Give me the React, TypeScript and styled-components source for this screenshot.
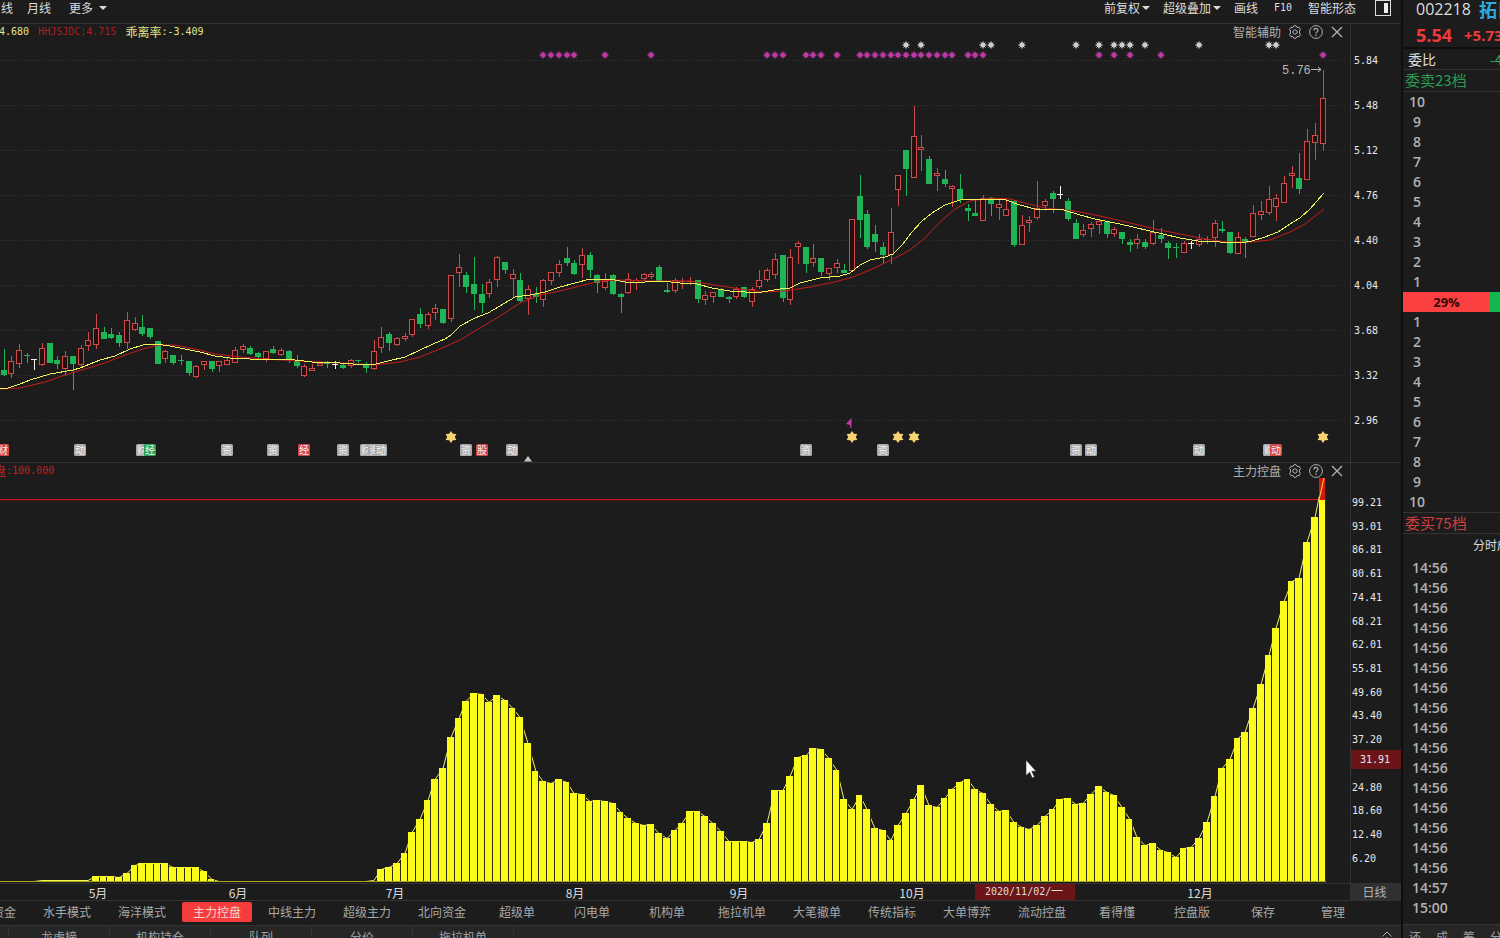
import React from "react";
import styled, { createGlobalStyle } from "styled-components";

const cjk = `"Noto Sans CJK SC", sans-serif`;
const mono = `"DejaVu Sans Mono", "Noto Sans CJK SC", monospace`;

const GlobalStyle = createGlobalStyle`
  * { box-sizing: border-box; }
  body {
    margin: 0;
    background: #1c1c1c;
    color: #dcdcdc;
    font: 12px/16px ${cjk};
    overflow: hidden;
  }
  button {
    margin: 0;
    padding: 0;
    border: 0;
    background: none;
    color: inherit;
    font: inherit;
    cursor: pointer;
    white-space: nowrap;
  }
`;

/* ---------- data ---------- */

// Horizontal position of the n-th trading session.
const sessionX = (n: number) => Math.round(3.5 + n * 7.714);

// Each session: colour, high, body top, body bottom, low.
// Levels count in thirds of a pixel below the block's origin.
const blocks: { origin: number; rows: string }[] = [
  {
    origin: 290,
    rows: `G178,240,255,258 R198,213,250,265 R163,181,218,235 G190,196,198,220 W208,208,208,240
    R160,175,223,228 G160,160,218,220 G198,210,223,238 R183,199,235,258 G199,199,222,300
    R165,175,223,233 R127,150,166,182 R72,115,163,178 G112,126,146,148 G115,132,143,146
    G127,136,158,172 R67,91,157,178 R82,99,116,122 G75,112,131,137 G115,115,142,147
    G152,153,221,222 R180,184,203,218 G195,196,218,226 G195,210,211,226 G213,214,248,258
    R225,229,257,263 R213,213,223,240 G213,214,238,246 R213,214,226,246 R205,211,223,226
    R172,181,217,218 R162,167,176,190 G168,174,193,196 G185,189,201,208 R183,184,203,217
    G168,178,190,192 R175,181,193,198 G181,183,208,220 G195,212,228,234 R223,229,254,262
    R222,235,241,243 R215,218,226,228 G213,220,221,235 W213,221,221,238 G220,225,233,236
    R208,209,226,234 G210,211,211,220 G215,226,235,250`,
  },
  {
    origin: 230,
    rows: `R330,364,415,420 R290,322,352,368 G305,312,338,362 R322,325,341,347 R308,317,325,332
    R267,268,313,320 G235,252,281,293 R246,253,284,296 R223,235,247,270 G237,238,278,282
    R135,136,265,275 R72,112,127,172 G127,135,171,188 G82,162,191,240 G163,193,218,250
    R148,157,190,205 R78,82,146,172 G95,96,119,132 R118,133,145,203 G128,150,214,216
    R165,178,205,255 G172,192,202,218 R147,151,208,230 R126,127,149,165 R90,103,125,140
    G51,84,98,108 G90,99,131,134 R55,76,103,145 G66,75,119,145 G133,134,160,188
    R130,153,170,180 G133,134,191,194 G190,193,200,248 R130,147,187,193 R145,149,155,180
    R128,133,143,152 R127,133,139,147 G105,111,154,156 G160,181,187,188 R145,151,179,190
    R143,152,155,178 R142,152,155,165 G150,150,208,218 R183,196,208,226 R186,187,199,218
    G174,177,200,202 G197,202,207,218 R172,178,199,206 G171,172,201,205 R170,178,214,232`,
  },
  {
    origin: 90,
    rows: `R541,571,589,596 R533,541,568,575 R490,508,553,566 G495,495,623,635 R478,502,628,645
    R452,460,469,521 G471,472,523,548 R463,505,517,532 G504,505,547,558 R533,535,550,570
    R506,520,532,550 G522,541,548,550 R387,388,539,540 G255,318,389,445 G360,372,470,478
    G405,433,455,486 G457,472,494,520 R355,427,493,521 R255,256,298,348 G180,181,236,318
    R48,139,262,264 R135,170,176,242 G198,208,281,282 R235,250,256,302 G240,268,281,292
    R285,287,293,352 G252,297,330,340 G342,354,362,394 G330,370,377,378 R315,325,391,393
    G320,325,341,377 R325,343,352,390 R325,358,376,378 G330,332,465,470 R375,406,463,465
    R378,391,397,426 R273,355,382,390 R328,332,344,362 G303,310,326,368 W288,313,313,327
    G325,332,386,392`,
  },
  {
    origin: 40,
    rows: `G538,549,596,598 R553,570,581,592 R547,552,564,592 R538,543,551,582 G543,545,581,593
    R560,568,580,592 G575,577,597,613 G597,606,614,636 R582,597,610,628 G597,606,620,628
    R541,577,608,615 G565,585,596,608 G602,609,623,657 G608,622,623,654 R602,608,635,638
    W603,610,610,627 R583,598,613,620 R587,598,600,612 R541,549,592,622 G543,567,574,580
    G576,577,638,641 R577,592,640,641 G592,597,608,655 R495,520,589,591 R484,514,523,540
    R438,478,517,524 R463,474,497,543 R408,430,487,490 R378,400,406,443 G340,415,446,461
    R268,304,418,420 R248,286,307,360 R90,175,310,332`,
  },
];

const candles = blocks.flatMap(({ origin, rows }) =>
  rows.split(/\s+/).map((row) => {
    const [high, top, bottom, low] = row
      .slice(1)
      .split(",")
      .map((v) => Math.round(origin + Number(v) / 3));
    return { tone: row[0], high, top, bottom, low };
  })
);

const fastLine =
  "0,388 8,388 20,384 30,380 50,374 73,370 80,368 100,360 115,356 130,349 143,345 155,344 170,346 185,349 200,352 215,356 230,358 250,359 275,359 295,360 312,362 340,363 365,365 376,364 388,361 405,357 420,350 433,344 445,339 451,335 460,326 475,318 488,313 505,303 515,297 530,295 545,292 560,287 575,283 590,279 615,280 625,282 645,282 662,281 680,283 697,284 712,288 730,291 745,292 762,292 780,289 790,288 800,283 820,278 840,276 850,273 860,265 870,260 885,257 893,254 903,244 912,232 922,221 932,213 945,205 960,200 975,199 990,199 1006,200 1020,205 1035,209 1064,210 1080,215 1095,219 1120,224 1150,231 1180,238 1198,241 1220,242 1240,243 1252,241 1265,237 1278,232 1290,224 1300,218 1310,209 1324,193";
const slowLine =
  "0,389 20,388 45,382 65,375 85,369 105,363 125,355 143,349 158,345 175,345 195,349 215,354 240,357 265,359 300,361 340,363 374,365 400,362 420,357 440,349 460,340 480,328 500,316 520,303 540,295 560,291 580,286 600,281 620,280 650,281 690,281 715,285 740,289 765,292 785,291 810,287 830,283 850,278 870,270 893,259 910,250 925,238 940,222 955,209 970,201 990,198 1010,199 1025,203 1045,208 1075,211 1100,216 1130,223 1160,230 1200,238 1225,242 1250,242 1270,240 1290,232 1305,224 1324,209";

const range = (from: number, to: number) =>
  Array.from({ length: to - from + 1 }, (_, i) => from + i);

const magentaMarks = [
  ...range(70, 74), 78, 84, ...range(99, 101), ...range(104, 106), 108,
  ...range(111, 123), ...range(125, 127), 142, 144, 146, 150, 171,
];
const whiteMarks = [117, 119, 127, 128, 132, 139, 142, 144, 145, 146, 148, 155, 164, 165];
const goldStars = [58, 110, 116, 118, 171];

const gray = "#a9a9a9";
const red = "#d2474c";
const badges: [number, string, string][] = [
  [3, "财", red], [80, "动", gray], [142, "财", gray], [150, "经", "#23a455"],
  [227, "资", gray], [273, "资", gray], [304, "经", red], [343, "资", gray],
  [366, "财", gray], [374, "资", gray], [381, "动", gray], [466, "资", gray],
  [482, "股", red], [512, "动", gray], [806, "资", gray], [883, "资", gray],
  [1076, "资", gray], [1091, "动", gray], [1199, "动", gray], [1269, "财", gray],
  [1276, "动", red],
];

// Top edge of every control bar, one per session; the base line is at 881.
const barTops = [
  ...Array(5).fill(881), ...Array(7).fill(880),
  876, 876, 876, 877, 873, 865, 863, 863, 863, 863, 867, 867, 867, 867, 871, 879,
  ...Array(20).fill(881), 880,
  869, 867, 863, 853, 832, 819, 800, 779, 768, 737, 718, 701, 693, 694, 702, 695,
  700, 708, 717, 743, 771, 781, 783, 779, 782, 793, 794, 801, 800, 801, 803, 812,
  818, 823, 825, 824, 833, 838, 830, 823, 811, 811, 816, 823, 831, 841, 841, 841,
  842, 839, 823, 790, 790, 776, 757, 755, 748, 749, 758, 770, 799, 809, 795, 809,
  828, 830, 840, 825, 813, 799, 785, 805, 807, 798, 789, 782, 779, 789, 793, 804,
  811, 810, 822, 827, 829, 825, 816, 809, 799, 798, 804, 803, 794, 786, 792, 795,
  807, 819, 837, 845, 843, 850, 852, 857, 848, 847, 838, 822, 796, 768, 759, 738,
  732, 708, 684, 655, 628, 601, 581, 578, 542, 517, 478,
];

const months: [number, string][] = [
  [98, "5月"], [238, "6月"], [395, "7月"], [575, "8月"], [739, "9月"], [912, "10月"], [1200, "12月"],
];

const priceTicks = ["5.84", "5.48", "5.12", "4.76", "4.40", "4.04", "3.68", "3.32", "2.96"];
const controlTicks = [
  "99.21", "93.01", "86.81", "80.61", "74.41", "68.21", "62.01", "55.81",
  "49.60", "43.40", "37.20", "", "24.80", "18.60", "12.40", "6.20",
];
const indicatorTabs = [
  "主力资金", "水手模式", "海洋模式", "主力控盘", "中线主力", "超级主力", "北向资金", "超级单",
  "闪电单", "机构单", "拖拉机单", "大笔撤单", "传统指标", "大单博弈", "流动控盘", "看得懂", "控盘版",
];
const panelTabs = ["龙虎榜", "机构持仓", "队列", "分价", "拖拉机单"];
const times = [...Array(16).fill("14:56"), "14:57", "15:00"];

/* ---------- styled parts ---------- */

const Page = styled.div`
  display: flex;
  height: 100vh;
  overflow: hidden;
  background: #1c1c1c;
`;
const Main = styled.main`
  flex: 1;
  min-width: 0;
  display: flex;
  flex-direction: column;
`;
const Toolbar = styled.header`
  display: flex;
  flex: none;
  justify-content: space-between;
  height: 24px;
  padding-right: 4px;
  border-bottom: 1px solid #333;
`;
const ToolGroup = styled.div<{ $gap: number; $shift?: number }>`
  display: flex;
  align-items: flex-start;
  gap: ${(p) => p.$gap}px;
  margin-left: ${(p) => p.$shift ?? 0}px;
`;
const ToolButton = styled.button<{ $pad?: number }>`
  display: flex;
  align-items: center;
  height: 16px;
  padding: 0 ${(p) => p.$pad ?? 0}px;
`;
const Caret = styled.span<{ $gap?: number }>`
  margin-left: ${(p) => p.$gap ?? 2}px;
  border: 4px solid transparent;
  border-top-color: #dcdcdc;
  border-bottom-width: 0;
`;
const Digits = styled.span`
  font: 10px/16px ${mono};
`;
const ChartRow = styled.section`
  display: grid;
  grid-template-columns: minmax(0, 1fr) 51px;
  flex: none;
  border-bottom: 1px solid #333;
`;
const Plot = styled.div`
  position: relative;
  display: flex;
  justify-content: flex-end;
  overflow: hidden;
  svg { flex: none; }
`;
const Legend = styled.div<{ $left: number }>`
  position: absolute;
  top: 0;
  left: ${(p) => p.$left}px;
  display: flex;
  gap: 9px;
  white-space: nowrap;
`;
const LegendItem = styled.span<{ $color: string }>`
  display: flex;
  color: ${(p) => p.$color};
`;
const PlotTools = styled.div`
  position: absolute;
  top: 0;
  right: 6px;
  display: flex;
  align-items: center;
  gap: 7px;
  color: #b0b0b0;
`;
const IconButton = styled.button`
  display: flex;
  width: 14px;
  height: 16px;
  align-items: center;
  justify-content: center;
`;
const ScaleColumn = styled.div<{ $top: number; $bottom: number; $left: number }>`
  position: relative;
  display: flex;
  flex-direction: column;
  justify-content: space-between;
  padding: ${(p) => p.$top}px 0 ${(p) => p.$bottom}px ${(p) => p.$left}px;
  border-left: 1px solid #333;
  color: #e8e8e8;
  font: 10px/14px ${mono};
`;
const Tick = styled.span`
  height: 14px;
`;
const ValueTag = styled.span`
  position: absolute;
  top: 287px;
  left: 0;
  right: 0;
  height: 19px;
  padding-left: 9px;
  background: #6b1519;
  line-height: 19px;
`;
const PeriodButton = styled.button`
  height: 16px;
  padding-right: 3px;
  border-left: 1px solid #333;
  background: #303030;
  color: #b0b0b0;
`;
const TabBar = styled.nav`
  display: flex;
  flex: none;
  align-items: center;
  gap: 5px;
  height: 25px;
  margin-left: -43px;
  padding-bottom: 2px;
  border-bottom: 1px solid #333;
  color: #a8a8a8;
`;
const Tab = styled.button<{ $active?: boolean }>`
  flex: none;
  width: 70px;
  height: 20px;
  border-radius: 2px;
  background: ${(p) => (p.$active ? "#f63c3c" : "none")};
  color: ${(p) => (p.$active ? "#f3d4d4" : "inherit")};
`;
const TabActions = styled.div`
  display: flex;
  margin-left: -4px;
`;
const FooterBar = styled.nav`
  display: flex;
  flex: none;
  justify-content: space-between;
  height: 24px;
  padding: 0 8px;
  background: #262626;
  color: #a0a0a0;
`;
const FooterTabs = styled.div`
  display: flex;
  border-left: 1px solid #333;
`;
const FooterTab = styled.button`
  width: 101px;
  padding-bottom: 2px;
  border-right: 1px solid #333;
`;
const ExpandButton = styled.button`
  display: flex;
  padding-top: 5px;
`;
const Side = styled.aside`
  flex: 0 0 99px;
  overflow: hidden;
  border-left: 2px solid #0e0e0e;
  white-space: nowrap;
`;
const StockLine = styled.div`
  display: flex;
  align-items: center;
  gap: 8px;
  height: 22px;
  padding: 0 0 4px 13px;
  font: 16px/18px "Open Sans", ${cjk};
`;
const StockName = styled.strong`
  color: #2fa9e0;
  font: bold 18px/18px ${cjk};
`;
const PriceLine = styled.div`
  display: flex;
  align-items: center;
  gap: 12px;
  height: 27px;
  padding-left: 13px;
  border-bottom: 2px solid #0e0e0e;
  color: #f0393b;
  font: bold 18px/20px "Open Sans", sans-serif;
`;
const Change = styled.span`
  font-size: 15px;
`;
const RatioLine = styled.div`
  display: flex;
  gap: 54px;
  height: 21px;
  padding-left: 5px;
  border-bottom: 1px solid #333;
  font-size: 14px;
  line-height: 20px;
`;
const Down = styled.span`
  color: #21b35b;
`;
const DepthTitle = styled.h2<{ $color: string; $topLine?: boolean }>`
  height: 22px;
  margin: 0;
  padding-left: 2px;
  border-top: ${(p) => (p.$topLine ? "1px solid #333" : "0")};
  border-bottom: 1px solid #333;
  color: ${(p) => p.$color};
  font: 15px/19px ${cjk};
`;
const NumberList = styled.ol<{ $width: number }>`
  width: ${(p) => p.$width}px;
  margin: 0;
  padding: 0;
  list-style: none;
  color: #b2b2b2;
  font: 600 14px/20px "Open Sans", sans-serif;
  text-align: center;
`;
const RatioBar = styled.div`
  display: flex;
  height: 20px;
  background: #12b84b;
  color: #3a0606;
  font: bold 13px/20px "Open Sans", sans-serif;
`;
const RatioFill = styled.div`
  width: 87px;
  background: #fa4040;
  text-align: center;
`;
const TradeTitle = styled.h3`
  margin: 0;
  padding: 0 0 2px 70px;
  font: 12px/22px ${cjk};
`;
const TradeList = styled(NumberList)`
  padding-left: 9px;
  text-align: left;
`;
const SideTabs = styled.nav`
  display: flex;
  gap: 15px;
  margin-top: 6px;
  padding: 4px 0 0 6px;
  border-top: 1px solid #333;
  background: #262626;
  color: #a0a0a0;
`;

/* ---------- drawings ---------- */

const Gear = () => (
  <svg width="14" height="14" viewBox="0 0 14 14" fill="none" stroke="currentColor" strokeLinejoin="round">
    <path d="M5 2.400 6 .7h2l1 1.700h2.200l1.200 2L11.500 6v2l.9 1.600-1.200 2H9l-1 1.700H6l-1-1.700H2.800l-1.200-2L2.500 8V6l-.9-1.600 1.200-2z" />
    <circle cx="7" cy="7" r="2.200" />
  </svg>
);
const Help = () => (
  <svg width="14" height="14" viewBox="0 0 14 14" fill="none" stroke="currentColor">
    <circle cx="7" cy="7" r="6.400" />
    <path d="M5 5.500c0-2.700 4-2.700 4-.2C9 6.800 7 6.900 7 8.500M7 9.600v1.300" strokeWidth="1.200" />
  </svg>
);
const Close = () => (
  <svg width="14" height="14" viewBox="0 0 14 14" stroke="currentColor" strokeWidth="1.400">
    <path d="M2 2l10 10M12 2 2 12" />
  </svg>
);

const PlotHeader = ({ title }: { title: string }) => (
  <PlotTools>
    <span>{title}</span>
    <IconButton aria-label={`${title} 设置`}><Gear /></IconButton>
    <IconButton aria-label={`${title} 帮助`}><Help /></IconButton>
    <IconButton aria-label={`${title} 关闭`}><Close /></IconButton>
  </PlotTools>
);

const Burst = ({ x, y, color }: { x: number; y: number; color: string }) => (
  <g transform={`translate(${x} ${y})`} stroke={color}>
    <path d="M0-4V4M-4 0H4M-2.800-2.800 2.800 2.800M-2.800 2.800 2.800-2.800" opacity=".6" />
    <circle r="2.200" fill={color} />
  </g>
);

const Candle = ({ x, c }: { x: number; c: (typeof candles)[number] }) => {
  const height = Math.max(c.bottom - c.top, 1);
  const color = c.tone === "R" ? "#cf4a4a" : c.tone === "G" ? "#1fb557" : "#f0f0f0";
  if (c.tone === "R" && height > 1) {
    return (
      <g fill={color}>
        <rect x={x} y={c.high} width="1" height={Math.max(c.top - c.high, 0)} />
        <rect x={x} y={c.bottom} width="1" height={Math.max(c.low - c.bottom, 0)} />
        <rect x={x - 2.5} y={c.top + 0.5} width="5" height={height} fill="#250f0f" stroke={color} />
      </g>
    );
  }
  return (
    <g fill={color}>
      <rect x={x} y={c.high} width="1" height={Math.max(c.low - c.high, 1)} />
      <rect x={x - 3} y={c.top} width="6" height={height} />
    </g>
  );
};

const PriceChart = () => (
  <svg width="1350" height="438" viewBox="0 24 1350 438" role="img" aria-label="日线">
    <g stroke="#343434" strokeDasharray="1 2" shapeRendering="crispEdges">
      {priceTicks.map((t, i) => (
        <path key={t} d={`M0 ${60.5 + i * 45}H1346`} />
      ))}
    </g>
    <g shapeRendering="crispEdges">
      {candles.map((c, i) => (
        <Candle key={i} x={sessionX(i)} c={c} />
      ))}
    </g>
    <polyline points={slowLine} fill="none" stroke="#c81c1c" />
    <polyline points={fastLine} fill="none" stroke="#f2f25a" shapeRendering="crispEdges" />
    {magentaMarks.map((n) => (
      <Burst key={n} x={sessionX(n)} y={55} color="#c03aa8" />
    ))}
    {whiteMarks.map((n) => (
      <Burst key={n} x={sessionX(n)} y={45} color="#cfcfcf" />
    ))}
    <text x="1282" y="74" fill="#b8b8b8" fontFamily="Liberation Mono" fontSize="12">5.76</text>
    <path d="M1311 69.500H1321M1318 67l3 2.500-3 2.500" fill="none" stroke="#b8b8b8" />
    {goldStars.map((n) => (
      <path
        key={n}
        transform={`translate(${sessionX(n)} 437)`}
        d="M0-6 1.900-3.200 5.400-3.100 3.800 0 5.400 3.100 1.900 3.200 0 6-1.900 3.200-5.400 3.100-3.800 0-5.400-3.100-1.900-3.200z"
        fill="#f5d370"
      />
    ))}
    <path d="M851.500 418v10h-1l-.5-3-4-1z" fill="#c03aa8" />
    {badges.map(([x, label, color]) => (
      <g key={x}>
        <rect x={x - 6} y="444" width="12" height="12" rx="1.500" fill={color} />
        <text x={x} y="454" fill="#f4f4f4" fontFamily="Noto Sans CJK SC" fontSize="10" textAnchor="middle">
          {label}
        </text>
      </g>
    ))}
    <path d="M524 461.500 528 456l4 5.500z" fill="#c8c8c8" />
  </svg>
);

const barFill = "#fbfb1c";

const ControlBar = ({ n, top }: { n: number; top: number }) => {
  const left = sessionX(n) - 4;
  const width = sessionX(n + 1) - sessionX(n) - 1;
  const over = top < 500;
  const yellowTop = over ? 500 : top;
  return (
    <g>
      <rect x={left + width} y={top + 1} width="1" height={880 - top} fill="#2c2c08" />
      {over && <rect x={left} y={top} width={width} height={500 - top} fill="#d81808" />}
      <rect x={left} y={yellowTop} width={width} height={881 - yellowTop} fill={barFill} />
    </g>
  );
};

const ControlChart = () => (
  <svg width="1350" height="420" viewBox="0 463 1350 420" role="img" aria-label="主力控盘">
    <g stroke="#252525" strokeDasharray="1 3">
      {controlTicks.map((_, i) => (
        <path key={i} d={`M0 ${502.5 + Math.round(i * 23.72)}H1346`} />
      ))}
    </g>
    <rect x="0" y="499" width="1324" height="1" fill="#c81c1c" />
    <rect x="0" y="500" width="1320" height="1" fill="#481216" />
    <polyline
      points={barTops.map((top, i) => `${i === 0 ? 0 : sessionX(i)},${top + 0.5}`).join(" ")}
      fill="none"
      stroke="#f4f45a"
    />
    <g shapeRendering="crispEdges">
      {barTops.map((top, i) => (top < 880 ? <ControlBar key={i} n={i} top={top} /> : null))}
    </g>
    <path d="M1319 500l5-22" stroke="#f4e05a" />
    <path d="M0 881.500H1326" stroke="#a8a818" shapeRendering="crispEdges" />
    <path d="M1026 760v15.500l3.600-3.200 2.700 5.600 2.200-1-2.700-5.600h4.400z" fill="#fff" stroke="#222" strokeWidth=".6" />
  </svg>
);

const DateAxis = () => (
  <svg width="1350" height="16" viewBox="0 0 1350 16" fontFamily="Noto Sans CJK SC" fontSize="12" fill="#dcdcdc">
    {months.map(([x, label]) => (
      <text key={label} x={x} y="14" textAnchor="middle">{label}</text>
    ))}
    <rect x="975" width="100" height="16" fill="#6b1519" />
    <text x="985" y="11" fontFamily="DejaVu Sans Mono" fontSize="10">2020/11/02/</text>
    <text x="1051" y="12">一</text>
  </svg>
);

/* ---------- page ---------- */

export default function App() {
  return (
    <Page>
      <GlobalStyle />
      <Main>
        <Toolbar>
          <ToolGroup $gap={14} $shift={-11}>
            <ToolButton>周线</ToolButton>
            <ToolButton>月线</ToolButton>
            <ToolButton $pad={4}>更多<Caret $gap={6} /></ToolButton>
          </ToolGroup>
          <ToolGroup $gap={13}>
            <ToolButton>前复权<Caret /></ToolButton>
            <ToolButton>超级叠加<Caret /></ToolButton>
            <ToolButton>画线</ToolButton>
            <ToolButton $pad={3}><Digits>F10</Digits></ToolButton>
            <ToolButton>智能形态</ToolButton>
            <ToolButton $pad={6} aria-label="侧栏">
              <svg width="16" height="16" viewBox="0 0 16 16">
                <rect x=".5" y=".5" width="15" height="15" fill="none" stroke="#dcdcdc" />
                <rect x="9" y="3" width="4" height="10" fill="#eee" />
              </svg>
            </ToolButton>
          </ToolGroup>
        </Toolbar>

        <ChartRow>
          <Plot>
            <PriceChart />
            <Legend $left={-1}>
              <LegendItem $color="#e4e48a"><Digits>4.680</Digits></LegendItem>
              <LegendItem $color="#b01c1c"><Digits>HHJSJDC:4.715</Digits></LegendItem>
              <LegendItem $color="#e4e48a">乖离率<Digits>:-3.409</Digits></LegendItem>
            </Legend>
            <PlotHeader title="智能辅助" />
          </Plot>
          <ScaleColumn $top={30} $bottom={34} $left={3}>
            {priceTicks.map((t) => <Tick key={t}>{t}</Tick>)}
          </ScaleColumn>
        </ChartRow>

        <ChartRow>
          <Plot>
            <ControlChart />
            <Legend $left={-6}>
              <LegendItem $color="#c81e1e">盘<Digits>:100.000</Digits></LegendItem>
            </Legend>
            <PlotHeader title="主力控盘" />
          </Plot>
          <ScaleColumn $top={33} $bottom={17} $left={1}>
            {controlTicks.map((t, i) => <Tick key={i}>{t}</Tick>)}
            <ValueTag>31.91</ValueTag>
          </ScaleColumn>
        </ChartRow>

        <ChartRow>
          <Plot><DateAxis /></Plot>
          <PeriodButton>日线</PeriodButton>
        </ChartRow>

        <TabBar>
          {indicatorTabs.map((t) => (
            <Tab key={t} $active={t === "主力控盘"}>{t}</Tab>
          ))}
          <TabActions>
            <Tab>保存</Tab>
            <Tab>管理</Tab>
          </TabActions>
        </TabBar>

        <FooterBar>
          <FooterTabs>
            {panelTabs.map((t) => <FooterTab key={t}>{t}</FooterTab>)}
          </FooterTabs>
          <ExpandButton aria-label="展开">
            <svg width="12" height="12" viewBox="0 0 12 12" fill="none" stroke="#b0b0b0">
              <path d="M1.500 5.500 6 1l4.500 4.500M3 9.500l3-3 3 3" />
            </svg>
          </ExpandButton>
        </FooterBar>
      </Main>

      <Side>
        <StockLine>002218<StockName>拓日新能</StockName></StockLine>
        <PriceLine>5.54<Change>+5.73%</Change></PriceLine>
        <RatioLine>委比<Down>-42%</Down></RatioLine>
        <DepthTitle $color="#2c9a55">委卖23档</DepthTitle>
        <NumberList $width={28}>
          {range(1, 10).reverse().map((n) => <li key={n}>{n}</li>)}
        </NumberList>
        <RatioBar><RatioFill>29%</RatioFill></RatioBar>
        <NumberList $width={28}>
          {range(1, 10).map((n) => <li key={n}>{n}</li>)}
        </NumberList>
        <DepthTitle $color="#d0403f" $topLine>委买75档</DepthTitle>
        <TradeTitle>分时成交</TradeTitle>
        <TradeList $width={90}>
          {times.map((t, i) => <li key={i}>{t}</li>)}
        </TradeList>
        <SideTabs>
          {["还", "成", "筹", "分"].map((t) => <button key={t}>{t}</button>)}
        </SideTabs>
      </Side>
    </Page>
  );
}
